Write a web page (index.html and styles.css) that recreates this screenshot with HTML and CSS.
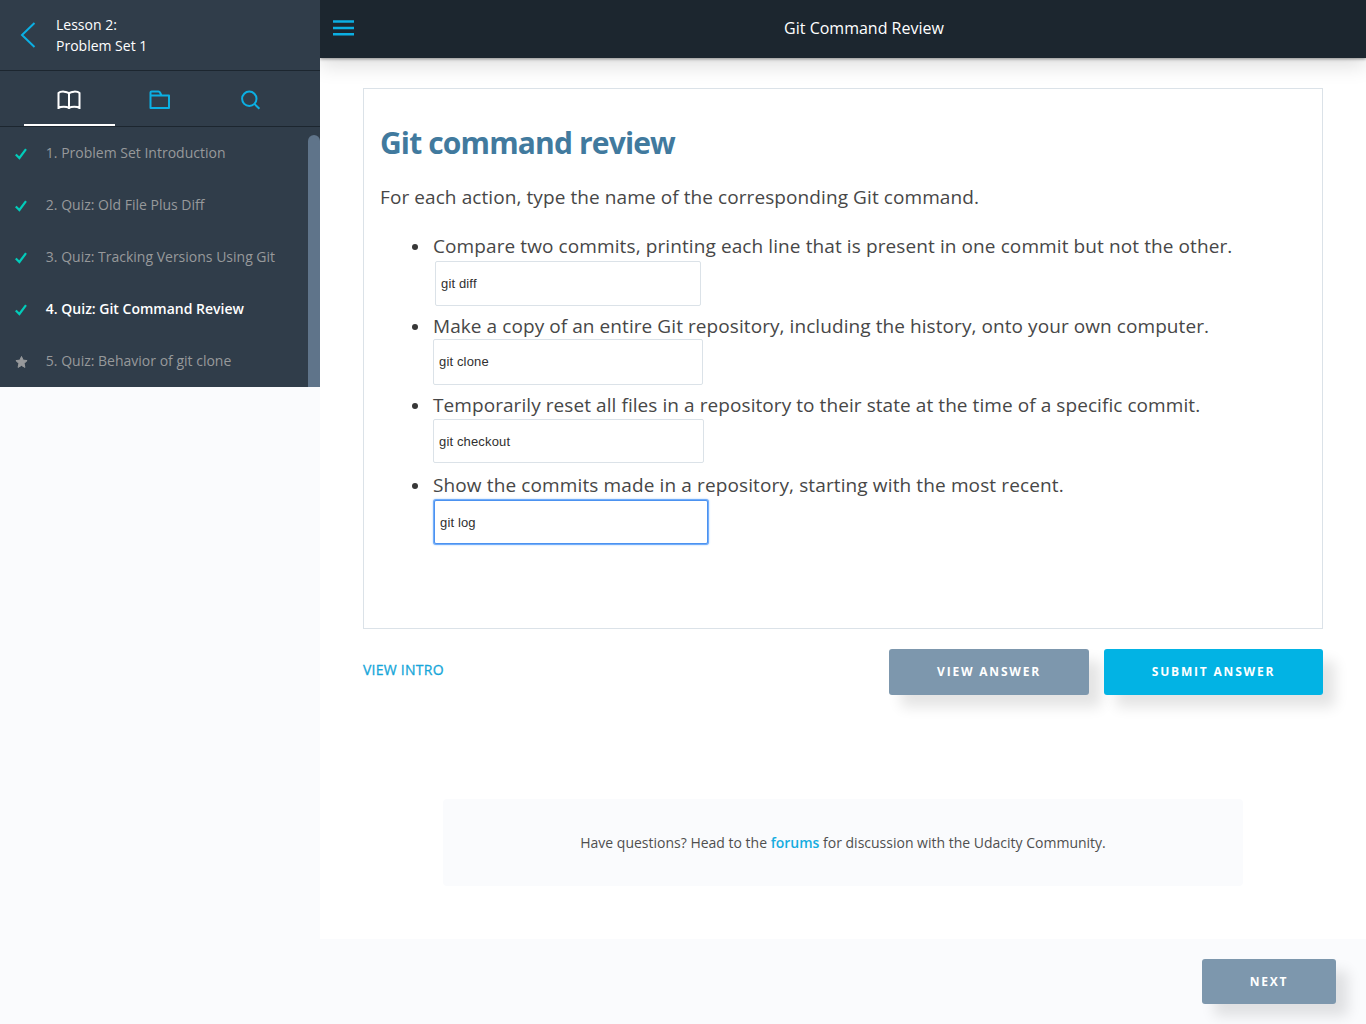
FILE: index.html
```html
<!DOCTYPE html>
<html lang="en">
<head>
<meta charset="utf-8">
<title>Git Command Review</title>
<link rel="stylesheet" href="styles.css">
</head>
<body>
<div class="app">
  <aside class="sidebar">
    <header class="lesson">
      <svg class="back" width="16" height="26" viewBox="0 0 16 26"><path d="M14.500 1 2 13l12.500 12"/></svg>
      <div class="lesson-title">Lesson 2:<br>Problem Set 1</div>
    </header>
    <nav class="tabs">
      <a class="tab active"><svg width="24" height="20" viewBox="0 0 24 20"><path d="M12 3.500C10.500 1.200 3.500 1 1.500 3V19M12 3.500C13.500 1.200 20.500 1 22.500 3V19M12 3.500V19M1.500 17.800c2.500-1.500 8-1.500 10.500 0 2.500-1.500 8-1.500 10.500 0"/></svg></a>
      <a class="tab"><svg width="22" height="20" viewBox="0 0 22 20"><path d="M1.500 5.500h18.500v12.500H1.500V2.500q0-1 1-1h7q1 0 1.500 1l1.500 3"/></svg></a>
      <a class="tab search"><svg width="22" height="22" viewBox="0 0 22 22"><circle cx="9.300" cy="9.800" r="7.200"/><path d="m14.400 14.900 5 4.800"/></svg></a>
    </nav>
    <div class="contents">
      <ol class="steps">
        <li><svg class="check" width="12" height="12" viewBox="0 0 12 12"><path d="M.8 6.500 4.400 10 11 1.200"/></svg><span>1. Problem Set Introduction</span></li>
        <li><svg class="check" width="12" height="12" viewBox="0 0 12 12"><path d="M.8 6.500 4.400 10 11 1.200"/></svg><span>2. Quiz: Old File Plus Diff</span></li>
        <li><svg class="check" width="12" height="12" viewBox="0 0 12 12"><path d="M.8 6.500 4.400 10 11 1.200"/></svg><span>3. Quiz: Tracking Versions Using Git</span></li>
        <li class="current"><svg class="check" width="12" height="12" viewBox="0 0 12 12"><path d="M.8 6.500 4.400 10 11 1.200"/></svg><span>4. Quiz: Git Command Review</span></li>
        <li><svg class="star" width="13" height="12" viewBox="0 0 13 12"><path d="m6.500.5 1.600 3.600 4 .5-3 2.800.8 4-3.400-2-3.400 2 .8-4-3-2.800 4-.5z"/></svg><span>5. Quiz: Behavior of git clone</span></li>
      </ol>
      <div class="scrollbar"></div>
    </div>
  </aside>
  <div class="page">
    <header class="topbar">
      <svg class="menu" width="22" height="16" viewBox="0 0 22 16"><path d="M0 1.500h21M0 8h21M0 14.200h21"/></svg>
      <h1>Git Command Review</h1>
    </header>
    <main>
      <section class="quiz">
        <h2>Git command review</h2>
        <p>For each action, type the name of the corresponding Git command.</p>
        <ul>
          <li><span class="q q1">Compare two commits, printing each line that is present in one commit but not the other.</span><input class="answer a1" value="git diff"></li>
          <li><span class="q q2">Make a copy of an entire Git repository, including the history, onto your own computer.</span><input class="answer a2" value="git clone"></li>
          <li><span class="q q3">Temporarily reset all files in a repository to their state at the time of a specific commit.</span><input class="answer a3" value="git checkout"></li>
          <li><span class="q q4">Show the commits made in a repository, starting with the most recent.</span><input class="answer a4" value="git log"></li>
        </ul>
      </section>
      <div class="actions">
        <a class="intro">VIEW INTRO</a>
        <button class="btn view">VIEW ANSWER</button>
        <button class="btn submit">SUBMIT ANSWER</button>
      </div>
      <div class="forum"><span>Have questions? Head to the <a>forums</a> for discussion with the Udacity Community.</span></div>
    </main>
    <footer><button class="btn next">NEXT</button></footer>
  </div>
</div>
</body>
</html>
```

FILE: styles.css
```css
* { box-sizing: border-box; }
body { margin: 0; background: #fafbfd; font-family: "Open Sans", sans-serif; font-size: 14px; color: #4f4f4f; }
svg { display: block; fill: none; flex: none; stroke: #0bafe3; }
.app { display: flex; align-items: flex-start; width: 1366px; height: 1024px; overflow: hidden; }

.sidebar { width: 320px; height: 387px; background: #303d4a; flex: none; overflow: hidden; }
.lesson { display: flex; align-items: center; height: 71px; padding-left: 20px; border-bottom: 1px solid #1c262f; }
.back { stroke-width: 2; }
.lesson-title { margin-left: 20px; color: #fff; line-height: 21px; }
.tabs { display: flex; height: 56px; padding: 0 24px; border-bottom: 1px solid #1c262f; }
.tab { width: 90.600px; display: flex; align-items: center; justify-content: center; padding-top: 5px; border-bottom: 2px solid transparent; }
.tab svg { stroke-width: 2; stroke-linejoin: round; }
.tab.active { border-color: #fff; }
.tab.active svg { stroke: #fff; }
.tab.search { padding: 4px 0 0 2px; }
.contents { display: flex; }
.steps { flex: 1; margin: -1px 0 0; padding: 0; list-style: none; color: #97999b; }
.steps li { height: 52px; display: flex; align-items: center; padding-left: 15px; }
.steps span { width: 260px; margin-left: 18.850px; }
.steps li .star + span { margin-left: 18.250px; }
.steps svg { margin-top: 4px; }
.steps .star { margin-left: -.4px; }
.check { stroke: #02ccba; stroke-width: 2.200; }
.star { stroke: #97999b; stroke-linejoin: round; fill: #97999b; }
.steps .current { color: #fff; font-weight: 600; }
.scrollbar { width: 12px; height: 270px; margin-top: 8px; background: #5f748a; border-radius: 6px; }

.page { flex: 1; }
.topbar { position: relative; display: flex; align-items: center; height: 58px; padding: 0 13px; background: #1c262f; box-shadow: 0 1px 3px rgba(0,0,0,.4), 0 8px 20px rgba(0,0,0,.13); clip-path: inset(0 0 -50px 0); }
.menu { stroke-width: 2.500; margin-top: -3px; }
.topbar h1 { flex: 1; margin: -2px -20px 0 0; color: #fff; font-size: 16px; font-weight: 400; text-align: center; }
main { height: 881px; padding: 30px 43px 0; background: #fff; }
.quiz { height: 541px; padding: 33px 16px 0; border: 1px solid #dbe2e8; color: #474747; }
.quiz h2 { margin: 0; height: 42px; line-height: 42px; color: #417a9e; font-size: 30px; font-weight: 700; letter-spacing: -.850px; white-space: nowrap; }
.quiz p { margin: 18px 0 0; font-size: 19px; line-height: 30px; letter-spacing: .087px; white-space: nowrap; }
.quiz ul { margin: 19px 0 0; padding: 0 0 0 53px; font-size: 19px; list-style: none; }
.quiz li { display: flex; flex-direction: column; height: 79.700px; }
.quiz li::before { content: ""; width: 6px; height: 6px; margin: 13px 0 -19px -21px; flex: none; border-radius: 50%; background: #383838; }
.q { height: 30px; line-height: 30px; white-space: nowrap; }
.q1 { letter-spacing: .1px; }
.q2 { letter-spacing: .075px; }
.q3 { letter-spacing: .071px; }
.q4 { letter-spacing: .122px; }
.answer { display: block; flex: none; padding: 0 5px; border: 1px solid #dbe2e8; border-radius: 2px; background: #fff; color: #303030; font: 13px "Liberation Sans", sans-serif; letter-spacing: .15px; outline: none; }
.a1 { width: 266px; height: 45px; margin-left: 2px; }
.a2 { width: 270px; height: 46px; margin-top: -2px; }
.a3 { width: 271px; height: 44px; margin-top: -1px; }
.a4 { width: 274px; height: 44px; margin: 0 0 0 1px; border-color: #4c92f0; box-shadow: 0 0 0 1px #72adf9, 0 0 2px 1px #a9cdfb; }

.actions { display: flex; align-items: flex-start; margin-top: 20px; }
.intro { margin: 11px auto 0 0; color: #16a6d9; line-height: 20px; font-weight: 500; letter-spacing: .25px; -webkit-text-stroke: .3px #16a6d9; }
.btn { height: 46px; padding: 0 0 2px; border: 0; border-radius: 3px; color: #fff; font: 700 12px "Open Sans", sans-serif; letter-spacing: 1.800px; box-shadow: 12px 12px 14px rgba(0,0,0,.11); }
.view { width: 200px; background: #7d97ad; }
.submit { width: 219px; margin-left: 15px; background: #02b3e4; }
.forum { display: flex; align-items: center; justify-content: center; width: 800px; height: 87px; margin: 104px auto 0; background: #fafbfd; border-radius: 4px; }
.forum a { color: #16ade0; font-weight: 600; }
footer { display: flex; justify-content: flex-end; padding: 20px 30px 0 0; }
.next { width: 134px; height: 45px; padding: 0; background: #7d97ad; }
```
